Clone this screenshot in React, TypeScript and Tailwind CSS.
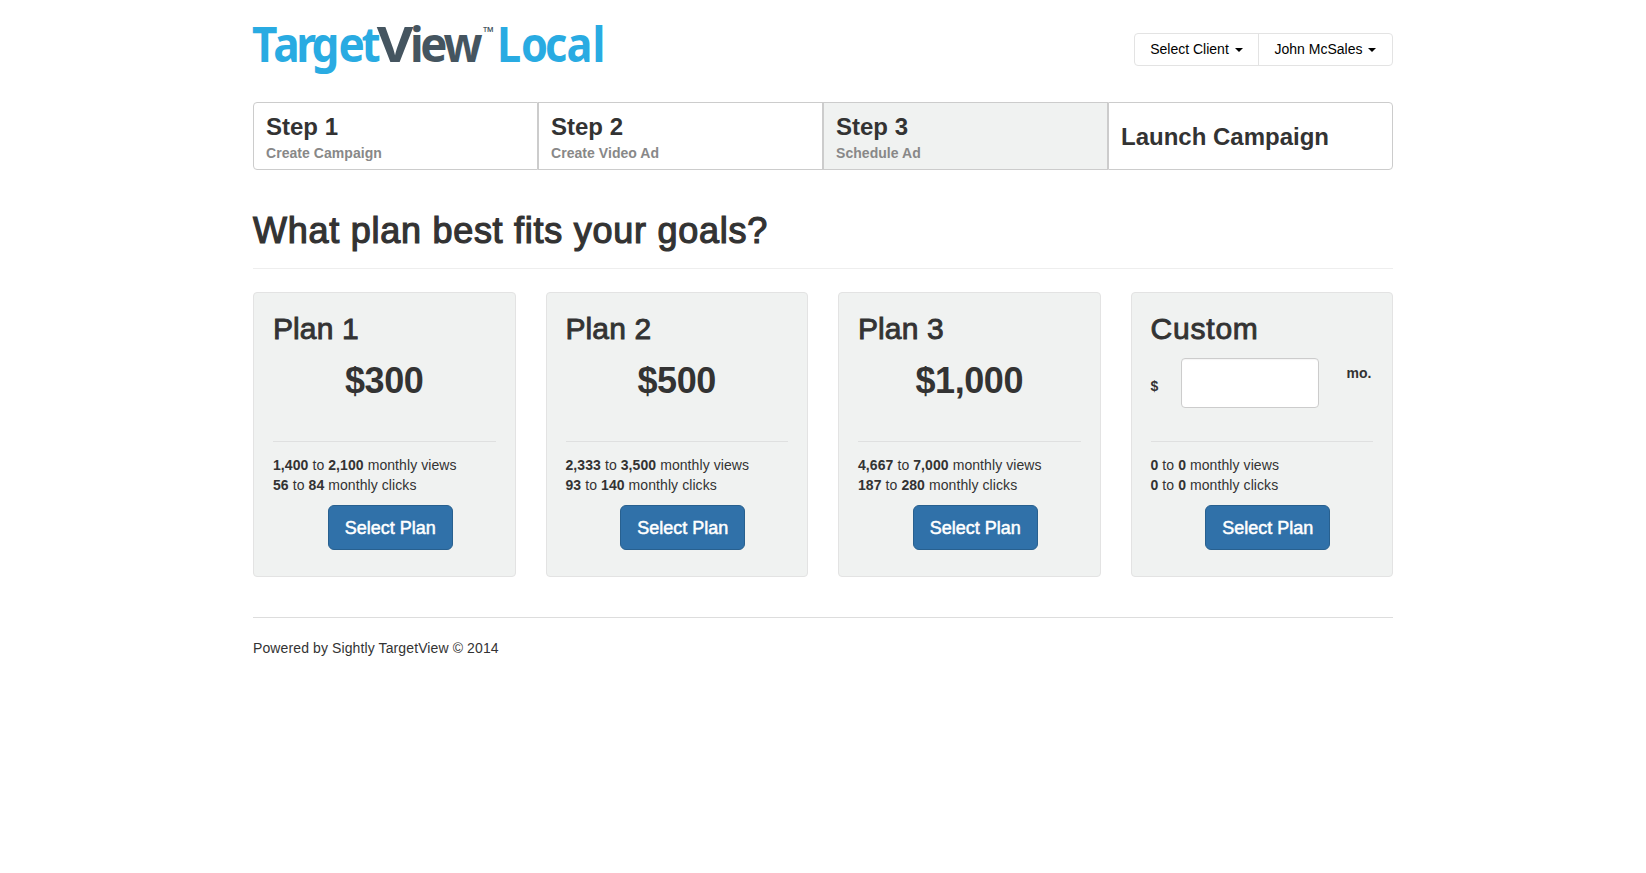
import React from "react";

type Step = { title: string; subtitle?: string; active?: boolean };
type Plan = { name: string; price?: string; views: [string, string]; clicks: [string, string] };

const steps: Step[] = [
  { title: "Step 1", subtitle: "Create Campaign" },
  { title: "Step 2", subtitle: "Create Video Ad" },
  { title: "Step 3", subtitle: "Schedule Ad", active: true },
  { title: "Launch Campaign" },
];

const plans: Plan[] = [
  { name: "Plan 1", price: "$300", views: ["1,400", "2,100"], clicks: ["56", "84"] },
  { name: "Plan 2", price: "$500", views: ["2,333", "3,500"], clicks: ["93", "140"] },
  { name: "Plan 3", price: "$1,000", views: ["4,667", "7,000"], clicks: ["187", "280"] },
  { name: "Custom", views: ["0", "0"], clicks: ["0", "0"] },
];

// The wordmark is tightly kerned, so each glyph has its own x position.
function Logo() {
  return (
    <svg className="overflow-visible" width="360" height="80" viewBox="0 0 360 80" role="img" aria-label="TargetView Local">
      <g fontFamily="'Noto Sans', sans-serif" fontWeight="700" fontSize="48">
        <text transform="scale(0.92 1)" x="-1 22 47 63.5 93 118" y="62" fill="#29abe2">Target</text>
        <text transform="scale(0.95 1)" y="62" fill="#455560">
          <tspan x="130.3" textLength="38.5" lengthAdjust="spacingAndGlyphs">V</tspan>
          <tspan x="165.2 176 200.5">iew</tspan>
        </text>
        <text transform="scale(0.9 1)" x="271.2 297.7 324.4 348.3 377.3" y="62" fill="#29abe2">Local</text>
        <text x="230" y="37" fill="#455560" fontSize="14" fontWeight="500">™</text>
      </g>
    </svg>
  );
}

function Caret() {
  return <span className="mt-px ml-[6px] h-0 w-0 border-x-4 border-t-4 border-x-transparent border-t-black" />;
}

function Stat({ range, label }: { range: [string, string]; label: string }) {
  return (
    <p>
      <b>{range[0]}</b> to <b>{range[1]}</b> {label}
    </p>
  );
}

function PlanCard({ plan }: { plan: Plan }) {
  return (
    <section className="h-[285px] rounded border border-[#e3e3e3] bg-[#f0f2f1] px-[19px] pt-[19px]">
      <h2
        className={`h-[33px] text-[30px] leading-[33px] [-webkit-text-stroke:0.9px_#333] ${plan.price ? "tracking-[0.1px]" : "tracking-[0.8px]"}`}
      >
        {plan.name}
      </h2>
      {plan.price ? (
        <div className="h-[96px] pt-4 text-center text-[36px] leading-10 font-bold tracking-[-0.4px]">{plan.price}</div>
      ) : (
        <div className="flex h-[96px] items-start pt-[13px] font-bold">
          <span className="w-[30px] pt-[18px]">$</span>
          <input
            type="text"
            aria-label="Monthly budget"
            className="h-[50px] w-[138px] rounded border border-[#ccc] bg-white px-3 shadow-[inset_0_1px_1px_rgba(0,0,0,0.04)]"
          />
          <span className="ml-[28px] pt-[5px]">mo.</span>
        </div>
      )}
      <hr className="mb-[13px] border-[#dfe0e0]" />
      <div className="tracking-[0.08px]">
        <Stat range={plan.views} label="monthly views" />
        <Stat range={plan.clicks} label="monthly clicks" />
      </div>
      <div className="flex justify-center pt-[10px] pl-3">
        <button className="h-[45px] w-[125px] rounded-md border border-[#28608f] bg-[#3071a9] text-[18px] text-white [-webkit-text-stroke:0.5px_#fff]">
          Select Plan
        </button>
      </div>
    </section>
  );
}

export default function App() {
  return (
    <div className="min-h-screen bg-white font-['Liberation_Sans',Arial,sans-serif] text-[14px] leading-5 text-[#333]">
      <div className="mx-auto w-[1140px]">
        <header className="flex h-[102px] items-start justify-between">
          <Logo />
          <div className="mt-[33px] flex h-[33px] rounded border border-[#e3e3e3] text-black">
            <button className="flex w-[124px] items-center justify-center border-r border-[#e3e3e3] pb-px">
              Select Client
              <Caret />
            </button>
            <button className="flex w-[133px] items-center justify-center pb-px">
              John McSales
              <Caret />
            </button>
          </div>
        </header>

        <nav className="grid h-[68px] grid-cols-4">
          {steps.map((step) => (
            <div
              key={step.title}
              className={`flex flex-col justify-center border border-[#ccc] px-3 pt-[2px] font-bold first:rounded-l last:rounded-r ${step.active ? "bg-[#f0f2f1]" : ""}`}
            >
              <div className="text-[24px] leading-[30px]">{step.title}</div>
              {step.subtitle && (
                <div className="mt-px text-[14px] leading-5 tracking-[0.05px] text-[#888]">{step.subtitle}</div>
              )}
            </div>
          ))}
        </nav>

        <h1 className="mt-[41px] h-[57px] text-[36px] leading-10 tracking-[0.73px] [-webkit-text-stroke:1.2px_#333]">
          What plan best fits your goals?
        </h1>
        <hr className="mb-[23px] border-[#eee]" />

        <main className="grid grid-cols-4 gap-[30px]">
          {plans.map((plan) => (
            <PlanCard key={plan.name} plan={plan} />
          ))}
        </main>

        <footer className="mt-10 border-t border-[#ddd] pt-5 tracking-[0.11px]">
          Powered by Sightly TargetView © 2014
        </footer>
      </div>
    </div>
  );
}
